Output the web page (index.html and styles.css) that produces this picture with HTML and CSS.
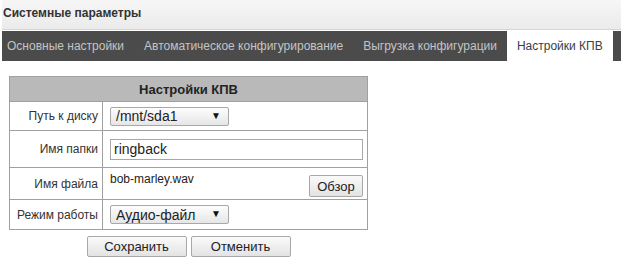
FILE: index.html
```html
<!DOCTYPE html>
<html lang="ru">
<head>
    <meta charset="UTF-8">
    <title>Системные параметры</title>
    <link rel="stylesheet" href="styles.css">
</head>
<body>

<div class="page">
    <div class="title-bar">Системные параметры</div>

    <!-- Вкладки -->
    <div class="tabs">
        <span class="tab">Основные настройки</span>
        <span class="tab">Автоматическое конфигурирование</span>
        <span class="tab">Выгрузка конфигурации</span>
        <span class="tab active">Настройки КПВ</span>
    </div>

    <div class="content">
        <table class="settings">
            <tr>
                <th colspan="2">Настройки КПВ</th>
            </tr>
            <tr class="row-disk">
                <td class="label">Путь к диску</td>
                <td>
                    <div class="select-wrap">
                        <select class="select">
                            <option>/mnt/sda1</option>
                        </select>
                    </div>
                </td>
            </tr>
            <tr class="row-folder">
                <td class="label">Имя папки</td>
                <td><input type="text" class="text-input" value="ringback"></td>
            </tr>
            <tr class="row-file">
                <td class="label">Имя файла</td>
                <td>
                    <div class="file-line">
                        <span class="file-name">bob-marley.wav</span>
                        <button class="btn btn-browse">Обзор</button>
                    </div>
                </td>
            </tr>
            <tr class="row-mode">
                <td class="label">Режим работы</td>
                <td>
                    <div class="select-wrap">
                        <select class="select">
                            <option>Аудио-файл</option>
                        </select>
                    </div>
                </td>
            </tr>
        </table>

        <div class="actions">
            <button class="btn btn-action">Сохранить</button>
            <button class="btn btn-action">Отменить</button>
        </div>
    </div>
</div>

</body>
</html>
```

FILE: styles.css
```css
body {
    margin: 0;
    font-family: "Liberation Sans", Arial, sans-serif;
    font-size: 12px;
    color: #333;
    background: #fff;
}
.page {
    padding: 0 2px;
}
.title-bar {
    height: 29px;
    line-height: 27px;
    padding-left: 1px;
    font-weight: bold;
    font-size: 12px;
    color: #333;
    background: linear-gradient(#f6f6f6, #ebebeb);
    border-bottom: 1px solid #d6d6d6;
}
.tabs {
    margin-top: 1px;
    height: 30px;
    background: #4b4b4b;
    display: flex;
}
.tab {
    padding: 0 10px;
    line-height: 30px;
    color: #c4c4c4;
    white-space: nowrap;
}
.tab:first-child {
    padding-left: 5px;
}
.tab.active {
    background: #fff;
    color: #3a3d4a;
}
.content {
    padding: 15px 0 0 7px;
}
.settings {
    border-collapse: collapse;
    width: 359px;
}
.settings th,
.settings td {
    border: 1px solid #a0a0a0;
}
.settings th {
    height: 24px;
    padding: 0;
    background: #b9b9b9;
    font-weight: bold;
    font-size: 13px;
    color: #222;
    text-align: center;
}
.settings td {
    padding: 0 0 0 7px;
}
.settings td.label {
    width: 88px;
    padding: 0 4px 0 0;
    text-align: right;
    color: #333;
    white-space: nowrap;
}
.row-disk td { height: 28px; }
.row-folder td { height: 36px; }
.row-file td { height: 31px; }
.row-mode td { height: 29px; }

.select-wrap {
    position: relative;
    width: 119px;
    height: 19px;
}
.select-wrap::after {
    content: "▼";
    position: absolute;
    right: 8px;
    top: 3px;
    font-size: 10px;
    color: #111;
    pointer-events: none;
}
.select {
    -webkit-appearance: none;
    appearance: none;
    width: 119px;
    height: 19px;
    padding: 0 0 0 5px;
    border: 1px solid #a8a8a8;
    border-radius: 2px;
    background: linear-gradient(#fdfdfd, #e6e6e6);
    font-family: "Liberation Sans", Arial, sans-serif;
    font-size: 14px;
    color: #222;
}
.text-input {
    box-sizing: border-box;
    width: 253px;
    height: 21px;
    padding: 0 3px;
    border: 1px solid #a8a8a8;
    font-family: "Liberation Sans", Arial, sans-serif;
    font-size: 14px;
    color: #222;
}
.file-line {
    display: flex;
    justify-content: space-between;
    align-items: flex-start;
    width: 253px;
}
.file-name {
    padding-top: 2px;
    color: #222;
}
.btn {
    box-sizing: border-box;
    border: 1px solid #a8a8a8;
    border-radius: 2px;
    background: linear-gradient(#fafafa, #e3e3e3);
    font-family: "Liberation Sans", Arial, sans-serif;
    font-size: 13px;
    color: #222;
    cursor: pointer;
    padding: 0;
}
.btn-browse {
    width: 54px;
    height: 22px;
    margin-top: 5px;
}
.actions {
    width: 359px;
    display: flex;
    justify-content: center;
    gap: 4px;
    margin-top: 6px;
}
.btn-action {
    width: 100px;
    height: 21px;
}
```
